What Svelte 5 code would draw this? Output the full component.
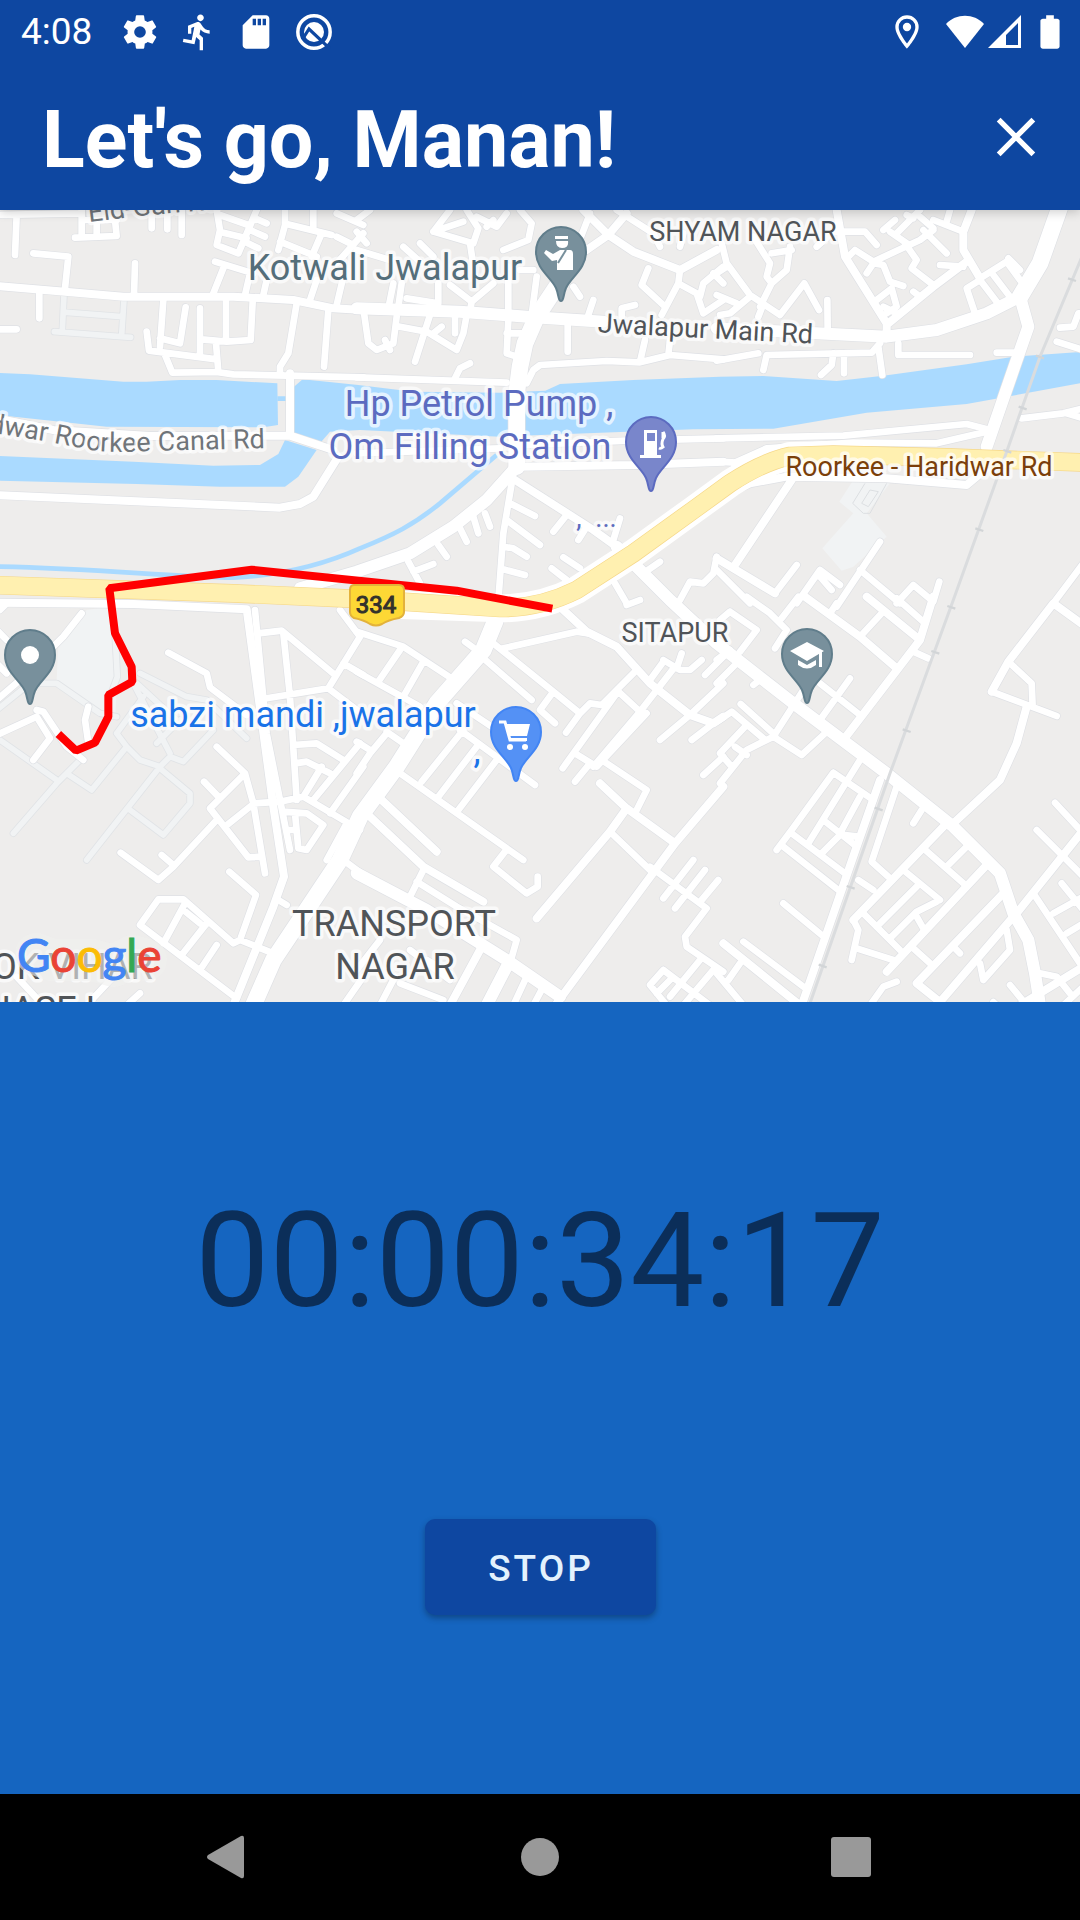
<script>
  // Road geometry is stored per tile, in tile units (three units per map pixel).
  const tiles = [
    {
      x: 0,
      y: 0,
      minor:
        'M-10 45L245 40M50 45L45 165M245 30V110M225 113L350 108L345 60M290 60V110M250 60H350M455 30V85M502 30V88M545 30V105M100 160L205 170L195 265M405 190L402 285M118 275V355M-10 388H50M490 300L480 440M440 395L447 452L650 478M480 415L540 430L557 322M600 325V465M678 305V425M605 418L680 425L752 420L758 305M648 430L655 515M495 465L517 518L650 516L700 523L1090 532M890 310L865 460L840 500V525M985 330L972 500M650 30L660 90L650 135L715 160L770 30M660 45L745 75M765 55L800 70M670 98L740 115M750 90L795 110M735 125L775 145M855 30V75L835 150M860 72L995 105M940 30V85M840 125L950 170M965 100L935 170M1010 40L1090 75M1010 110L1060 135M1090 100L1010 190M645 185L760 220M670 205L640 280M750 220L735 285M800 240L790 285M950 240L930 300M1030 230L1010 315',
      mid: 'M-10 258L160 272L370 290L700 290L880 300L1000 325L1090 330M870 520V705M-10 655L160 690L450 708L870 707L1000 750M1015 770L940 890L900 912L840 923L-10 885'
    },
    {
      x: 1080,
      y: 0,
      minor:
        'M-10 532L440 548M500 550L520 510L540 495L740 483L840 487L930 465L1090 478M285 535L300 505L330 490M445 200V340M445 360L440 460L470 470M440 400H490M530 230L515 345M480 210H520M10 325L25 430L50 450L100 430L110 350M90 450L75 420M210 345L165 485M120 380L200 395L290 450L310 400L320 345M285 340V400M245 380L220 400M100 250L85 325M125 250L115 320M235 250V310L140 295M270 255L335 305L400 250M335 305L330 335M-10 150L90 180M-10 60L30 30M-10 95L20 130M270 30L220 95L340 130L355 85L320 30M220 95L310 65M330 130L345 230M350 50L410 80L440 40M380 80L400 60M480 30L515 70L505 120L430 150M130 140L180 185M180 130L220 170M690 40L640 170M770 30L880 100L900 140M960 140L970 100M865 205L845 255L915 320M960 210L955 250L905 345M955 250L1010 280L1030 340L1090 300M1020 290L1030 250L1090 200M1060 220L1090 250M640 260L660 290M700 300L685 345M825 315L785 325V350M623 370V455M855 420L840 485M930 420L925 465M-10 760L420 745M500 735L800 722L1090 715M455 850L430 1000L415 1200M450 910L525 948M440 960L540 1035M430 1040L460 1045L500 1070M430 1108L495 1125M375 940L390 980M340 950L355 1000M300 985L320 1025M235 1035L260 1070M145 1085L180 1150M160 1115L220 1092M620 945L580 995M680 980L655 1020M780 955L760 1020M575 1105L620 1140M610 1072L660 1105M850 1120L900 1085M765 1150L800 1210M960 1200L990 1145L1030 1150L1060 1120L1070 1070',
      mid: 'M670 30L745 105L820 155L960 210L1070 150M680 150L745 105L800 40M470 800L830 795L1090 785M465 840L700 990L770 1040M480 770V800',
      major: 'M-10 325L300 335L500 350L730 365M465 805L380 900L280 980L150 1060L-10 1115L-180 1165',
      trunk: 'M590 260L530 350L495 430L480 500L470 580V800'
    },
    {
      x: 2160,
      y: 0,
      minor:
        'M100 110L150 190L140 230L155 250M210 140L200 210L155 250L120 320M155 160L215 150M5 130L20 190L90 285L180 345M-10 220L20 200M-10 285L50 310M90 290L30 340L0 345M180 345L253 250L297 330M125 325L115 350M322 300L323 385M290 140L340 95H435L470 135M380 175L405 150L460 185L600 120L640 90M440 220L460 190L490 195L510 245L550 258M470 300L515 265L530 320L500 340M490 320L530 340M580 275L600 290M555 130L590 180L575 205L640 255M510 95L560 130M525 60L490 90M530 100L600 30M560 45L580 55M600 50L640 85M610 90L680 160M640 60L730 95M690 30L680 65M660 195L730 200M780 240L740 265L765 340M780 235L860 185L900 240M780 240L830 305M820 225L870 290M865 175L900 210M-10 482L115 460M830 458H890M535 430V465H750M480 430L455 458L140 465L130 510M475 440L487 525M340 460L335 495L303 525M372 460V520M1020 383L1060 380L1075 340H1090M1010 425L1090 450M905 655L1030 640L1090 625M1040 640L1090 655M-10 785L50 788M165 1180L230 1095M-10 1110L90 1210M480 1025L350 1220M300 1110L230 1210M300 1110L360 1155M300 1130L335 1170M420 1110L540 1210M530 1210L580 1155L640 1205L658 1145M1090 1090L1000 1210M-10 715L370 707L740 672L810 690M40 790L140 745L400 728L650 730L800 695',
      mid: 'M350 30L375 170L500 370V395M505 370L640 260L740 185M755 30L730 95V150L780 235M215 840L45 1095M-10 1075L165 1180M-10 892L90 850L200 830L500 835L740 855L830 780',
      major: 'M900 290L925 380L890 480L800 740M-10 385L500 410L650 390L800 340L900 290',
      trunk: 'M900 290L960 190L1020 20'
    },
    {
      x: 0,
      y: 1200,
      minor:
        'M245 40L190 110L160 140M20 10L0 30M-10 90L20 120M-10 190L20 220M-10 300L60 240M-10 405L110 350L150 415L100 480M110 330L130 335L200 440L250 480M265 320L255 360L265 430M505 158L620 220L630 262L740 345M765 30L800 400L840 600L870 750M775 100L845 92L1005 225M850 100L870 290L890 600M800 295L985 265L1080 110M985 265L1090 345M1030 190L1090 225M1020 30L1080 110M880 435L950 430L1030 480M885 490L920 485L990 520M1080 430L940 600M965 500L910 590M760 610L840 605L910 590L1080 690M1090 500L990 640M850 635L920 640L970 675L920 750L895 745L885 640M865 690H885M1040 670L980 780M650 440L735 520L760 610L795 820M735 520L630 625L745 772L780 770M612 545L655 590M760 612L675 680M650 660L520 800L475 840L362 758M485 765L520 795M688 815L768 885L720 1020M420 975L475 898H550L700 1030L720 1020L820 1060M420 975L710 1195M555 910L490 1030M550 930L600 970M620 970L545 1065M650 1035L600 1110M835 900L860 915M1030 780L1090 825M420 1180L380 1216M340 1130L260 1216M50 1130L130 1216M1090 1130L1030 1216',
      mid: 'M-10 8L400 12L740 28L770 250L820 620L852 830L820 920L700 1216'
    },
    {
      x: 1080,
      y: 1200,
      minor:
        'M-10 95L130 140L290 245M120 150L55 245M190 185L130 290M-10 215L180 320M400 130L580 275L660 340M370 175L515 300M315 125L370 165M430 145L650 95L680 100M800 15L840 0M825 215L770 270L840 335M910 185L870 240M945 200L840 335L700 500M910 180L960 210L990 210L1025 180M965 160L950 205M645 460L710 500L860 340M770 280L608 505M690 490L645 545M725 480L860 570L830 630M750 695L870 810M870 800L1040 925L975 1010L980 1040L1090 1115M1000 780L910 895M1035 810L945 925M1075 840L1025 900M990 345L900 420M1060 370L995 420M1090 250L990 345M1035 225L1090 170M1090 470L1030 525M580 275L540 330L585 370M660 340L690 310L725 315L825 215M660 340L618 398M290 310L410 390M300 390L525 555M310 390L185 545M350 440L235 590M410 480L295 630M120 520L490 780M435 755L400 800L500 880L533 860V830M190 810L150 890M170 845L290 920L470 1020L450 1090M80 400L30 460L-10 520M-10 425L30 450M80 395L130 430M500 1130L460 1216M550 1160L520 1216M60 1020L-10 1110M105 1130L60 1216M120 1150L250 1200M150 1050L270 1140M200 1080L270 1120M1020 1080L930 1190M1060 1110L970 1216M910 1110L870 1155L920 1216M910 1110L1050 1216M930 1140L890 1180',
      mid: 'M605 25L680 95L770 140L870 250L990 345L1060 370L1090 350M65 600L230 755M30 650L190 800L370 905M720 550L800 625L945 730M800 625L750 695L530 955M1090 560L945 730L590 1210M360 1050L270 1216',
      major: 'M-10 820L200 930L440 1080L600 1190M440 1100L380 1216',
      trunk: 'M405 65L370 150L230 310L110 500L0 650L-60 780L-180 960L-260 1080L-320 1216'
    },
    {
      x: 2160,
      y: 1200,
      minor:
        'M80 -10L150 40L200 90L165 145M235 -10L185 55M30 35L110 90L60 155M30 35L0 60M-10 180L30 150M60 180L-10 250M125 235L100 255M350 10L330 40M485 40L420 110M530 -5L610 65M580 155L625 175M300 250L420 345M390 235L300 360M250 270L160 410L245 465L315 400M62 312L165 405M-10 365L35 335L130 415M75 380L0 460L35 500M45 440L80 465M160 410L80 450L0 550M420 480L265 730M340 518L460 600M340 518L215 690L170 750M215 700L375 820M310 660L410 740M420 590L360 700M355 710L305 760M375 705L415 710M190 740L355 870M190 910L305 1005M70 1025L250 1160M60 1090L25 1140M-10 1120L70 1216M605 630L580 670M410 1045L520 1080M415 840L460 870M550 810L660 900M610 745L730 850M740 740L680 800M430 940L540 1050M590 860L480 970M650 905L590 935L515 1010M590 950L610 985M575 1040L630 1090M700 1040L720 1060M860 990L870 1050L790 1140L780 1090M1005 608L1090 700M950 690L1090 830M940 880L1080 1090M1000 940L1090 890M1025 850L1090 930M1040 1000L1090 970M870 1155L920 1216M960 1120L1010 1130L1050 1180M450 1216L490 1160L530 1145M1030 1216L1090 1160M820 1206L830 1216M530 560L455 785L505 830M400 960L415 990L395 1080M815 275L1010 348M865 185L935 250L938 320',
      mid: 'M255 -10L420 110L530 205M440 -10L600 120M640 -10L600 120L370 420M480 540L410 740L245 1216M10 1030L240 1216M670 680L400 960M800 795L500 1115M850 880L590 1150L660 1206L880 950M700 670L840 540L890 430L920 320M815 275L865 185L1000 10L1090 75M1090 690L890 940M1090 1100L900 1216',
      major: 'M-310 -160L-150 0L-10 130L220 310L500 520L700 680L840 820L880 940L925 1020L945 1120L960 1216'
    }
  ];

  const classes = ['minor', 'mid', 'major', 'trunk'];

  const pins = [
    { kind: 'police', x: 561, y: 252, tone: 'slate' },
    { kind: 'fuel', x: 651, y: 442, tone: 'indigo' },
    { kind: 'dot', x: 30, y: 655, tone: 'slate' },
    { kind: 'cart', x: 516, y: 732, tone: 'blue' },
    { kind: 'school', x: 807, y: 654, tone: 'slate' }
  ];

  const labels = [
    { text: 'Kotwali Jwalapur', x: 385, y: 280, tone: 'slate', size: 'large' },
    { text: 'SHYAM NAGAR', x: 743, y: 241, tone: 'area', size: 'small' },
    { text: 'Hp Petrol Pump ,', x: 479, y: 416, tone: 'indigo', size: 'large' },
    { text: 'Om Filling Station', x: 470, y: 459, tone: 'indigo', size: 'large' },
    { text: ',', x: 579, y: 527, tone: 'indigo', size: 'small' },
    { text: '...', x: 606, y: 527, tone: 'indigo', size: 'small' },
    { text: 'Roorkee - Haridwar Rd', x: 919, y: 476, tone: 'brown', size: 'small' },
    { text: 'SITAPUR', x: 675, y: 642, tone: 'area', size: 'small' },
    { text: 'sabzi mandi ,jwalapur', x: 303, y: 727, tone: 'blue', size: 'large' },
    { text: ',', x: 477, y: 763, tone: 'blue', size: 'large' },
    { text: 'TRANSPORT', x: 394, y: 936, tone: 'area', size: 'large' },
    { text: 'NAGAR', x: 395, y: 979, tone: 'area', size: 'large' },
    { text: 'ASHOK VIHAR', x: 37, y: 979, tone: 'area', size: 'large' },
    { text: 'PHASE I', x: 29, y: 1022, tone: 'area', size: 'large' }
  ];

  let time = $state('00:00:34:17');
</script>

<div class="screen">
  <header>
    <div class="status">
      <span class="clock">4:08</span>
      <div class="tray">
        <svg viewBox="0 0 24 24"><path d="M19.4 13a7.800 7.800 0 0 0 0-2l2.100-1.650a.5.5 0 0 0 .12-.64l-2-3.460a.5.5 0 0 0-.61-.22l-2.490 1a7.300 7.300 0 0 0-1.690-.98l-.38-2.650A.49.49 0 0 0 14 2h-4a.49.49 0 0 0-.49.42l-.38 2.650c-.61.25-1.170.59-1.690.98l-2.490-1a.5.5 0 0 0-.61.22l-2 3.460a.5.5 0 0 0 .12.64L4.600 11a8 8 0 0 0 0 2l-2.110 1.650a.5.5 0 0 0-.12.64l2 3.460c.12.22.39.3.61.22l2.490-1c.52.4 1.080.73 1.690.98l.38 2.650c.03.24.24.42.49.42h4c.25 0 .46-.18.49-.42l.38-2.650c.61-.25 1.170-.59 1.690-.98l2.490 1c.23.09.49 0 .61-.22l2-3.460a.5.5 0 0 0-.12-.64zM12 15.500a3.500 3.500 0 1 1 0-7 3.500 3.500 0 0 1 0 7z" /></svg>
        <svg viewBox="0 0 24 24"><path d="M13.490 5.480c1.100 0 2-.9 2-2s-.9-2-2-2-2 .9-2 2 .9 2 2 2zm-3.600 13.900 1-4.400 2.100 2v6h2v-7.500l-2.100-2 .6-3c1.300 1.500 3.300 2.500 5.500 2.500v-2c-1.900 0-3.500-1-4.300-2.400l-1-1.600c-.4-.6-1-1-1.700-1-.3 0-.5.1-.8.1l-5.200 2.200v4.700h2v-3.400l1.800-.7-1.600 8.100-4.900-1-.4 2z" /></svg>
        <svg viewBox="0 0 24 24"><path d="M18 2h-8L4 8v12c0 1.100.9 2 2 2h12c1.100 0 2-.9 2-2V4c0-1.100-.9-2-2-2zm-6 6h-2V4h2zm3 0h-2V4h2zm3 0h-2V4h2z" /></svg>
        <svg viewBox="0 0 24 24">
          <circle cx="12" cy="12" r="9.700" fill="none" stroke="#fff" stroke-width="2.100" />
          <circle cx="12" cy="12" r="6" />
          <path d="M5 16.500L9 10.200L21.500 22" fill="none" stroke="#0e47a1" stroke-width="1.900" />
        </svg>
      </div>
      <div class="signals">
        <svg viewBox="0 0 24 24"><path fill-rule="evenodd" d="M12 2a7 7 0 0 0-7 7c0 5.200 7 13 7 13s7-7.800 7-13a7 7 0 0 0-7-7zM7 9a5 5 0 0 1 10 0c0 2.900-2.900 7.200-5 9.900C9.900 16.200 7 11.900 7 9z" /><circle cx="12" cy="9" r="2.500" /></svg>
        <svg class="wifi" viewBox="0 0 40 40"><path d="M1 12C11 1 29 1 39 12L20 36Z" /></svg>
        <svg class="cell" viewBox="0 0 40 40"><path fill-rule="evenodd" d="M3 36L36 3V36ZM21 33H33V11L21 23Z" /></svg>
        <svg viewBox="0 0 24 24"><path d="M15.700 4H14V2h-4v2H8.300C7.600 4 7 4.600 7 5.300v15.400c0 .7.6 1.300 1.300 1.300h7.400c.7 0 1.300-.6 1.300-1.300V5.300c0-.7-.6-1.300-1.300-1.300z" transform="translate(-1.800 0) scale(1.150 1)" /></svg>
      </div>
    </div>
    <div class="bar">
      <h1>Let's go, Manan!</h1>
      <button class="close" aria-label="Close">
        <svg viewBox="0 0 24 24"><path d="M5.500 5.500L18.500 18.500M18.500 5.500L5.500 18.500" /></svg>
      </button>
    </div>
  </header>

  <main>
    <section class="map" aria-label="Route map">
      <svg class="canvas" viewBox="0 210 1080 792" preserveAspectRatio="xMidYMid slice">
        <defs>
          <path id="canal-road" d="M-80 422L0 434L50 442L97 451Q120 453 150 451L265 448" />
          <path id="eid-gah" d="M89 222L140 216L240 207" />
        </defs>
        <g transform="translate(0 200) scale(0.333333)">
          <path class="water" d="M-5 519L90 523L370 545L440 545L540 540L650 540L832 550L834 675L790 682L320 680L-5 645Z" />
          <path class="water" d="M882 560L908 538L1075 555L1240 575L1500 578L1636 572L1680 552L1900 540L2160 530L2290 528L2510 543L2650 527L2900 493L3040 470L3245 456V549L2900 612L2600 638L2320 686L2080 688L1500 710L1080 690L990 695L960 730L878 705Z" />
          <path class="water" d="M-5 768L400 785L640 797L780 795L835 762L855 720L950 750L895 830L855 860H660L410 852L-5 842Z" />
          <path class="stream" d="M-5 1100C300 1106 500 1130 700 1133C850 1125 980 1090 1080 1045C1180 1005 1240 975 1320 910L1490 765M832 596H858" />
          <path class="plot" d="M2560 840L2670 850L2600 940L2660 1010L2560 1100L2525 1112L2467 1045L2560 940L2518 905ZM175 1330L260 1230L325 1220L355 1380L345 1560L300 1540L170 1440Z" />
          <path class="plot-line" d="M2595 850L2558 910L2590 940H2610L2660 850M2610 870L2585 910L2605 920L2635 875Z" />
          <path class="lane-edge" d="M192 285L187 390M372 300L365 405M200 337L365 350M163 395L392 412M110 1450H170L300 1540L350 1550M345 1300L352 1430L330 1490M-10 1530L90 1450M0 1620L170 1740M240 1680L170 1750L40 1900M200 1720L275 1770L380 1640L350 1600L430 1490M410 1450L540 1570M420 1420L560 1490L620 1500L740 1615M350 1600L380 1640L420 1680L480 1700L260 1980M480 1705L570 1780V1810L490 1905L390 1830M480 1700L510 1670L550 1685L640 1590M470 1630L540 1560M400 1450L510 1660" />
          <path class="lane" d="M192 285L187 390M372 300L365 405M200 337L365 350M163 395L392 412M110 1450H170L300 1540L350 1550M345 1300L352 1430L330 1490M-10 1530L90 1450M0 1620L170 1740M240 1680L170 1750L40 1900M200 1720L275 1770L380 1640L350 1600L430 1490M410 1450L540 1570M420 1420L560 1490L620 1500L740 1615M350 1600L380 1640L420 1680L480 1700L260 1980M480 1705L570 1780V1810L490 1905L390 1830M480 1700L510 1670L550 1685L640 1590M470 1630L540 1560M400 1450L510 1660" />
          {#each ['edge', 'fill'] as layer}
            {#each tiles as tile}
              <g transform="translate({tile.x} {tile.y})">
                {#each classes as name}
                  {#if tile[name]}
                    <path class="road {name} {layer}" d={tile[name]} />
                  {/if}
                {/each}
              </g>
            {/each}
          {/each}
          <path class="highway-edge" d="M1200 1215L1500 1225Q1620 1225 1730 1170L1900 1060L2080 930L2190 850Q2290 785 2370 768L2500 764" />
          <path class="highway-line" d="M-20 1155L700 1180L1100 1198L1500 1224Q1620 1225 1730 1170L1900 1060L2080 930L2190 850Q2290 785 2370 768L2500 764L2840 772L3260 788" />
          <path class="highway" d="M-20 1155L700 1180L1100 1198L1500 1224Q1620 1225 1730 1170L1900 1060L2080 930L2190 850Q2290 785 2370 768L2500 764L2840 772L3260 788" />
          <path class="rail" d="M3250 160L3120 470L3020 755L2860 1200L2670 1720L2430 2410" />
          <path class="tie" d="M3204 235L3228 243M3108 467L3132 475M3056 620L3080 628M3010 750L3034 758M2926 985L2950 993M2842 1218L2866 1226M2794 1353L2818 1361M2708 1588L2732 1596M2624 1823L2648 1831M2540 2058L2564 2066M2456 2294L2480 2302" />
        </g>

        <g class="labels">
          <text class="small muted" text-anchor="end"><textPath href="#canal-road" startOffset="100%">Haridwar Roorkee Canal Rd</textPath></text>
          <text class="small muted"><textPath href="#eid-gah">Eid-Gah Rd</textPath></text>
          <text class="small area" text-anchor="middle" x="705" y="338" transform="rotate(3 705 338)">Jwalapur Main Rd</text>
          {#each labels as label}
            <text class="{label.size} {label.tone}" text-anchor="middle" x={label.x} y={label.y}>{label.text}</text>
          {/each}
        </g>

        <g transform="translate(0 200) scale(0.333333)">
          <path class="route" d="M175 1602L228 1652L285 1628L325 1550V1485L397 1445L395 1400L345 1300L328 1165L755 1109L1370 1172L1657 1226" />
        </g>

        <path class="shield" d="M354 585H399Q404 585 404 590V612Q404 616 399 618Q388 620 382 624Q376 627 370 624Q364 620 354 618Q350 616 350 612V590Q350 585 354 585Z" />
        <text class="shield-text" text-anchor="middle" x="376" y="613">334</text>

        {#each pins as pin}
          <g transform="translate({pin.x} {pin.y})">
            <path class="pin {pin.tone}-pin" d="M0 49C-3 49-2 43-5 36C-10 25-25 17-25 0A25 25 0 1 1 25 0C25 17 10 25 5 36C2 43 3 49 0 49Z" />
            <g class="glyph">
              {#if pin.kind === 'police'}
                <path d="M-6-16H7V-13H-6ZM-5-11H7Q8-4 1-4Q-5-4-5-11ZM-1-2H9Q12-2 12 2V18H-4V8L-9 9L-17 1L-15-2L-8 2Z" />
                <path class="cut slate-cut" d="M5-2L-3 11" />
              {:else if pin.kind === 'fuel'}
                <path fill-rule="evenodd" d="M-7-12H6V13H10V16H-11V13H-7ZM-4-9V-1H4V-9Z" />
                <path class="line" d="M12-10V-4M12-10Q15-6 12-3Q10 2 12 5Q10 7 8 6" />
              {:else if pin.kind === 'dot'}
                <circle r="9" />
              {:else if pin.kind === 'cart'}
                <path d="M-10-8H14L11 4H-7ZM-7 6H11V9H-7Z" />
                <path class="line" d="M-17-10H-11L-6 8H10" />
                <circle cx="-6" cy="15" r="3" /><circle cx="9" cy="15" r="3" />
              {:else}
                <path d="M0-12L17-3L0 7L-17-3ZM-9 6L0 11L9 6V11Q0 18-9 11ZM12 0L15-2V13H12Z" />
              {/if}
            </g>
          </g>
        {/each}

        <path class="google-halo" d="M36 954L52 960H92L114 966L132 956L146 960" />
        <text class="google" x="17" y="972"><tspan class="g-blue">G</tspan><tspan class="g-red">o</tspan><tspan class="g-yellow">o</tspan><tspan class="g-blue">g</tspan><tspan class="g-green">l</tspan><tspan class="g-red">e</tspan></text>
      </svg>
    </section>

    <section class="panel">
      <time>{time}</time>
      <button class="stop">STOP</button>
    </section>
  </main>

  <nav>
    <button aria-label="Back"><svg viewBox="0 0 48 48"><path d="M3 22L36 3Q39 2 39 5V43Q39 46 36 45L3 26Q1 24 3 22Z" /></svg></button>
    <button aria-label="Home"><svg viewBox="0 0 48 48"><circle cx="24" cy="24" r="19" /></svg></button>
    <button aria-label="Recent apps"><svg viewBox="0 0 48 48"><rect x="4" y="4" width="40" height="40" rx="3" /></svg></button>
  </nav>
</div>

<style>
  :global(body) {
    margin: 0;
    background: #1565c0;
  }

  .screen {
    display: flex;
    flex-direction: column;
    min-height: 100vh;
    font-family: Roboto, sans-serif;
  }

  button {
    padding: 0;
    border: 0;
    background: none;
    font-family: inherit;
  }

  header {
    position: relative;
    z-index: 1;
    background: #0e47a1;
    color: #fff;
    box-shadow: 0 2px 10px rgba(0, 0, 0, 0.2);
  }

  .status {
    display: flex;
    align-items: center;
    height: 64px;
    padding: 0 10px 0 21px;
  }

  .clock {
    font-size: 37px;
    line-height: 40px;
  }

  .tray,
  .signals {
    display: flex;
    align-items: center;
  }

  .tray {
    gap: 18px;
    margin-left: 28px;
  }

  .signals {
    margin-left: auto;
  }

  .status svg {
    display: block;
    width: 40px;
    height: 40px;
    fill: #fff;
  }

  .status .wifi {
    margin-left: 18px;
  }

  .status .cell {
    margin-right: 5px;
  }

  .bar {
    display: flex;
    align-items: center;
    justify-content: space-between;
    height: 146px;
    padding: 0 32px 0 42px;
  }

  h1 {
    margin: 0;
    padding-top: 6px;
    font-size: 79px;
    font-weight: 700;
    line-height: 96px;
  }

  .close svg {
    display: block;
    width: 64px;
    height: 64px;
    stroke: #fff;
    stroke-width: 2;
  }

  main {
    display: flex;
    flex: 1;
    flex-direction: column;
  }

  .map {
    position: relative;
    flex: 1 1 0;
    min-height: 480px;
    overflow: hidden;
    background: #eeedec;
  }

  .canvas {
    position: absolute;
    inset: 0;
    width: 100%;
    height: 100%;
  }

  .water {
    fill: #aadaff;
  }

  .stream {
    fill: none;
    stroke: #aadaff;
    stroke-width: 14;
  }

  .plot {
    fill: #f1f3f4;
  }

  .plot-line {
    fill: none;
    stroke: #dcdfe2;
    stroke-width: 3;
  }

  .lane,
  .lane-edge,
  .road,
  .highway,
  .highway-line,
  .highway-edge {
    fill: none;
    stroke-linecap: round;
    stroke-linejoin: round;
  }

  .lane-edge {
    stroke: #e0e3e6;
    stroke-width: 22;
  }

  .lane {
    stroke: #f1f3f4;
    stroke-width: 17;
  }

  .edge {
    stroke: #dfe1e5;
  }

  .fill {
    stroke: #fff;
  }

  .minor.edge { stroke-width: 24; }
  .minor.fill { stroke-width: 20; }
  .mid.edge { stroke-width: 28; }
  .mid.fill { stroke-width: 24; }
  .major.edge { stroke-width: 40; }
  .major.fill { stroke-width: 36; }
  .trunk.edge { stroke-width: 54; }
  .trunk.fill { stroke-width: 50; }

  .highway-edge {
    stroke: #fff;
    stroke-width: 84;
  }

  .highway-line {
    stroke: #f6d88a;
    stroke-width: 56;
  }

  .highway {
    stroke: #fff0b0;
    stroke-width: 52;
  }

  .rail {
    fill: none;
    stroke: #dadcde;
    stroke-width: 9;
  }

  .tie {
    stroke: #d2d5d7;
    stroke-width: 7;
  }

  .route {
    fill: none;
    stroke: #f00;
    stroke-width: 24;
    stroke-linejoin: bevel;
  }

  .labels text {
    stroke: rgba(255, 255, 255, 0.7);
    stroke-width: 7px;
    stroke-linejoin: round;
    paint-order: stroke;
  }

  .labels .large {
    font-size: 36px;
  }

  .labels .small {
    font-size: 27px;
  }

  .slate { fill: #546e7a; }
  .indigo { fill: #5c6bc0; }
  .blue { fill: #1a73e8; }
  .brown { fill: #7b3f0a; }
  .area { fill: #505458; }
  .muted { fill: #70757a; }

  .shield {
    fill: #fdd835;
    stroke: #e3b23a;
    stroke-width: 2;
  }

  .shield-text {
    fill: #33322c;
    stroke: #33322c;
    font-size: 24px;
  }

  .pin {
    stroke-width: 2;
  }

  .slate-pin {
    fill: #78909c;
    stroke: #607d8b;
  }

  .indigo-pin {
    fill: #7986cb;
    stroke: #5c6bc0;
  }

  .blue-pin {
    fill: #5491f5;
    stroke: #4285f4;
  }

  .glyph {
    fill: #fff;
  }

  .line {
    fill: none;
    stroke: #fff;
    stroke-width: 3;
  }

  .cut {
    stroke-width: 2;
  }

  .slate-cut {
    stroke: #78909c;
  }

  .google-halo {
    fill: none;
    stroke: rgba(240, 240, 239, 0.6);
    stroke-width: 42;
    stroke-linecap: round;
    stroke-linejoin: round;
  }

  .google {
    font-family: Lato, sans-serif;
    font-size: 46px;
    font-weight: 400;
    stroke-width: 1px;
  }

  .g-blue { fill: #4285f4; stroke: #4285f4; }
  .g-red { fill: #ea4335; stroke: #ea4335; }
  .g-yellow { fill: #fbbc05; stroke: #fbbc05; }
  .g-green { fill: #34a853; stroke: #34a853; }

  .panel {
    display: flex;
    flex: 1 1 0;
    flex-direction: column;
    align-items: center;
    justify-content: space-evenly;
    background: #1565c0;
  }

  time {
    color: #0b2e59;
    font-size: 132px;
    line-height: 160px;
  }

  .stop {
    width: 231px;
    height: 96px;
    padding: 2px 0 0 2px;
    border-radius: 10px;
    background: #0e47a1;
    color: #e3f2fd;
    font-size: 37px;
    font-weight: 500;
    letter-spacing: 3px;
    box-shadow: 0 3px 6px rgba(0, 0, 0, 0.3);
  }

  nav {
    display: flex;
    justify-content: center;
    height: 126px;
    background: #000;
  }

  nav button {
    display: grid;
    place-items: center;
    width: 311px;
  }

  nav svg {
    width: 48px;
    height: 48px;
    fill: #999;
  }
</style>
